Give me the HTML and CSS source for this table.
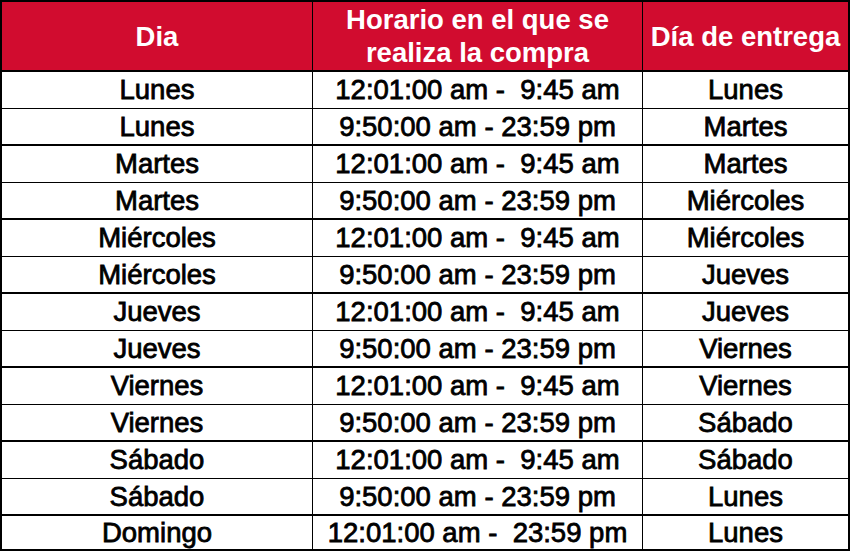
FILE: index.html
```html
<!DOCTYPE html>
<html lang="es">
<head>
<meta charset="utf-8">
<title>Horarios de entrega</title>
<link rel="stylesheet" href="styles.css">
</head>
<body>
<div class="table">
  <div class="row head">
    <div class="cell">Dia</div>
    <div class="cell">Horario en el que se<br>realiza la compra</div>
    <div class="cell">Día de entrega</div>
  </div>
  <div class="row odd"><div class="cell">Lunes</div><div class="cell">12:01:00 am -&nbsp; 9:45 am</div><div class="cell">Lunes</div></div>
  <div class="row even"><div class="cell">Lunes</div><div class="cell">9:50:00 am - 23:59 pm</div><div class="cell">Martes</div></div>
  <div class="row odd"><div class="cell">Martes</div><div class="cell">12:01:00 am -&nbsp; 9:45 am</div><div class="cell">Martes</div></div>
  <div class="row even"><div class="cell">Martes</div><div class="cell">9:50:00 am - 23:59 pm</div><div class="cell">Miércoles</div></div>
  <div class="row odd"><div class="cell">Miércoles</div><div class="cell">12:01:00 am -&nbsp; 9:45 am</div><div class="cell">Miércoles</div></div>
  <div class="row even"><div class="cell">Miércoles</div><div class="cell">9:50:00 am - 23:59 pm</div><div class="cell">Jueves</div></div>
  <div class="row odd"><div class="cell">Jueves</div><div class="cell">12:01:00 am -&nbsp; 9:45 am</div><div class="cell">Jueves</div></div>
  <div class="row even"><div class="cell">Jueves</div><div class="cell">9:50:00 am - 23:59 pm</div><div class="cell">Viernes</div></div>
  <div class="row odd"><div class="cell">Viernes</div><div class="cell">12:01:00 am -&nbsp; 9:45 am</div><div class="cell">Viernes</div></div>
  <div class="row even"><div class="cell">Viernes</div><div class="cell">9:50:00 am - 23:59 pm</div><div class="cell">Sábado</div></div>
  <div class="row odd"><div class="cell">Sábado</div><div class="cell">12:01:00 am -&nbsp; 9:45 am</div><div class="cell">Sábado</div></div>
  <div class="row even"><div class="cell">Sábado</div><div class="cell">9:50:00 am - 23:59 pm</div><div class="cell">Lunes</div></div>
  <div class="row last"><div class="cell">Domingo</div><div class="cell">12:01:00 am -&nbsp; 23:59 pm</div><div class="cell">Lunes</div></div>
</div>
</body>
</html>
```
FILE: styles.css
```css
html, body {
  margin: 0;
  padding: 0;
  background: #ffffff;
}

.table {
  width: 850px;
  box-sizing: border-box;
  border: 2px solid #000;
  font-family: "Liberation Sans", Arial, sans-serif;
  color: #000;
}

.row {
  display: grid;
  grid-template-columns: 311px 330px 205px;
  box-sizing: border-box;
}

.cell {
  display: flex;
  align-items: center;
  justify-content: center;
  text-align: center;
  white-space: nowrap;
  box-sizing: border-box;
  border-right: 1px solid #000;
  font-size: 27.5px;
  -webkit-text-stroke: 0.8px #000;
}

.cell:last-child {
  border-right: none;
}

.head {
  height: 70px;
  border-bottom: 2px solid #000;
  background: #d10c2f;
}

.head .cell {
  color: #fff;
  font-weight: bold;
  font-size: 27.5px;
  line-height: 33px;
  -webkit-text-stroke: 0;
}

.odd {
  height: 37px;
  border-bottom: 1px solid #000;
}

.even {
  height: 37px;
  border-bottom: 2px solid #000;
}

.last {
  height: 33px;
}
```
